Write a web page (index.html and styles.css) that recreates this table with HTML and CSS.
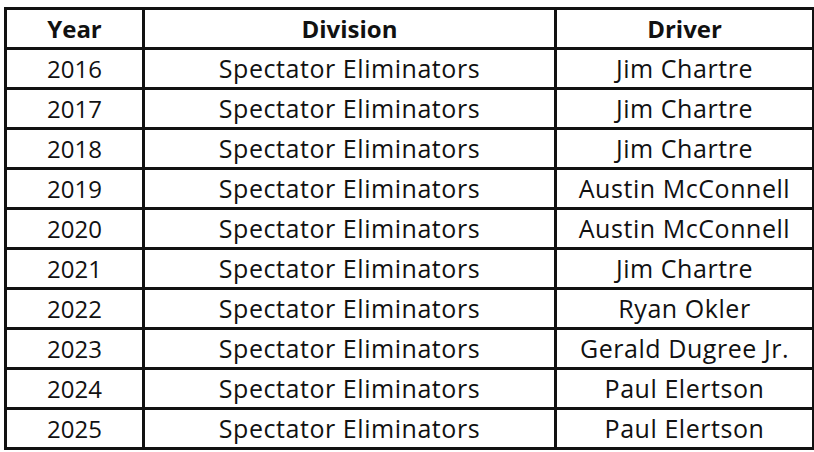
FILE: index.html
```html
<!DOCTYPE html>
<html>
<head>
<meta charset="utf-8">
<link rel="stylesheet" href="styles.css">
</head>
<body>
<table class="results">
  <colgroup>
    <col class="c-year">
    <col class="c-div">
    <col class="c-drv">
  </colgroup>
  <thead>
    <tr><th>Year</th><th>Division</th><th>Driver</th></tr>
  </thead>
  <tbody>
    <tr><td class="yr">2016</td><td>Spectator Eliminators</td><td>Jim Chartre</td></tr>
    <tr><td class="yr">2017</td><td>Spectator Eliminators</td><td>Jim Chartre</td></tr>
    <tr><td class="yr">2018</td><td>Spectator Eliminators</td><td>Jim Chartre</td></tr>
    <tr><td class="yr">2019</td><td>Spectator Eliminators</td><td>Austin McConnell</td></tr>
    <tr><td class="yr">2020</td><td>Spectator Eliminators</td><td>Austin McConnell</td></tr>
    <tr><td class="yr">2021</td><td>Spectator Eliminators</td><td>Jim Chartre</td></tr>
    <tr><td class="yr">2022</td><td>Spectator Eliminators</td><td>Ryan Okler</td></tr>
    <tr><td class="yr">2023</td><td>Spectator Eliminators</td><td>Gerald Dugree Jr.</td></tr>
    <tr><td class="yr">2024</td><td>Spectator Eliminators</td><td>Paul Elertson</td></tr>
    <tr><td class="yr">2025</td><td>Spectator Eliminators</td><td>Paul Elertson</td></tr>
  </tbody>
</table>
</body>
</html>
```

FILE: styles.css
```css
html, body {
  margin: 0;
  padding: 0;
  background: #fff;
}
body {
  padding: 7px 0 0 4px;
}
.results {
  border-collapse: collapse;
  width: 808px;
  table-layout: fixed;
  font-family: "Open Sans", Lato, sans-serif;
  font-size: 24px;
  color: #111;
}
.c-year { width: 138px; }
.c-div { width: 412px; }
.c-drv { width: 258px; }
.results th,
.results td {
  border: 3px solid #111;
  height: 37px;
  padding: 0;
  text-align: center;
  vertical-align: middle;
  line-height: 1;
}
.results th {
  font-weight: 700;
}
.results td {
  font-weight: 400;
  font-size: 25px;
  letter-spacing: 0.55px;
}
.results td.yr {
  font-size: 24px;
  letter-spacing: 0;
}
```
